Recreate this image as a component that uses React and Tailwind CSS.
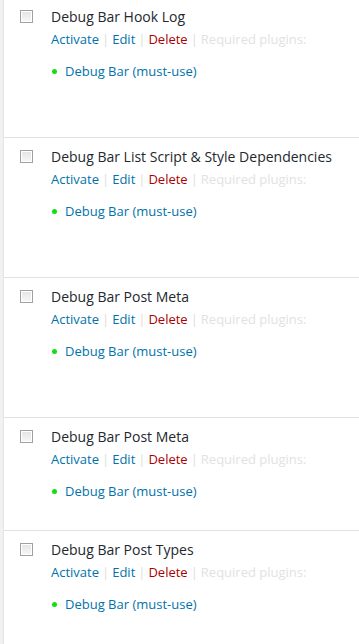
import React from 'react';

const plugins = [
  { name: 'Debug Bar Hook Log', height: 'h-[140px]' },
  { name: 'Debug Bar List Script & Style Dependencies', height: 'h-[140px]' },
  { name: 'Debug Bar Post Meta', height: 'h-[140px]' },
  { name: 'Debug Bar Post Meta', height: 'h-[113px]' },
  { name: 'Debug Bar Post Types', height: 'h-[140px]' },
];

const PluginRow = ({ name, height }) => (
  <div className={`flex border-b border-[#e1e1e1] ${height}`}>
    <div className="w-[47px] shrink-0 pl-[16px] pt-[12px]">
      <span className="block h-[13px] w-[13px] border border-[#a0a0a0] bg-gradient-to-b from-[#e4e4e4] to-[#f8f8f8] shadow-[inset_0_0_0_1px_#fff]" />
    </div>
    <div className="pt-[9px]">
      <div className="text-[14px] leading-[20px] text-[#23282d]">{name}</div>
      <div className="mt-[2px] text-[13px] leading-[20px]">
        <span className="text-[#0073aa]">Activate</span>
        <span className="px-[3px] text-[#ddd]">|</span>
        <span className="text-[#0073aa]">Edit</span>
        <span className="px-[3px] text-[#ddd]">|</span>
        <span className="text-[#a00]">Delete</span>
        <span className="px-[3px] text-[#ddd]">|</span>
        <span className="text-[#e2e2e2]">Required plugins:</span>
      </div>
      <ul className="mt-[12px] text-[13px] leading-[20px]">
        <li className="flex items-center">
          <span className="ml-[1px] mr-[8px] h-[5px] w-[5px] rounded-full bg-[#11e011]" />
          <span className="text-[#0073aa]">Debug Bar (must-use)</span>
        </li>
      </ul>
    </div>
  </div>
);

export default function App() {
  return (
    <div className="flex min-h-[644px] h-[644px] overflow-hidden bg-white font-['Open_Sans',sans-serif]">
      <div className="w-[4px] shrink-0 border-r border-[#e5e5e5] bg-[#f1f1f1]" />
      <div className="-mt-[2px] flex-1">
        {plugins.map((p, i) => (
          <PluginRow key={i} name={p.name} height={p.height} />
        ))}
      </div>
    </div>
  );
}
